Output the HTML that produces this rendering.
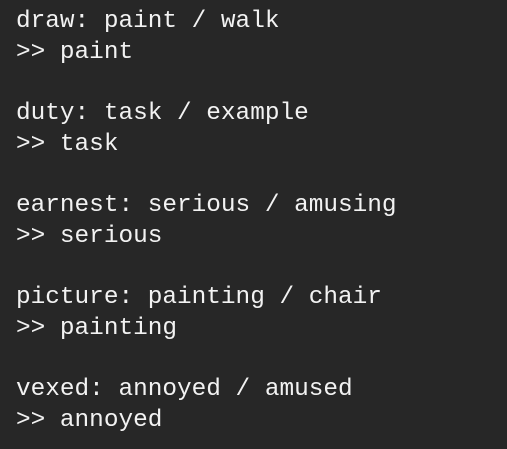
<!DOCTYPE html>
<html><head><style>
html,body{margin:0;padding:0;background:#272727;width:507px;height:449px;overflow:hidden}
pre{margin:0;position:absolute;left:16px;top:7px;font-family:"Liberation Mono",monospace;font-size:24.4px;line-height:30.7px;color:#f2f2f2}
</style></head><body><pre>draw: paint / walk
&gt;&gt; paint

duty: task / example
&gt;&gt; task

earnest: serious / amusing
&gt;&gt; serious

picture: painting / chair
&gt;&gt; painting

vexed: annoyed / amused
&gt;&gt; annoyed</pre></body></html>
